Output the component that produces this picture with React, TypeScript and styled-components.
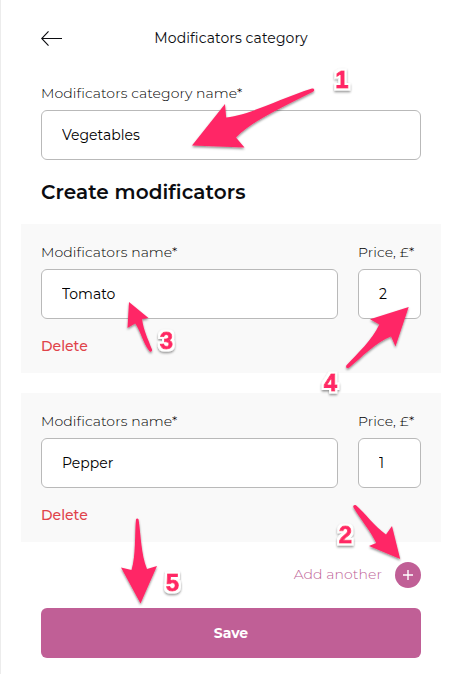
import React from "react";
import styled, { createGlobalStyle } from "styled-components";

const GlobalStyle = createGlobalStyle`
  * { box-sizing: border-box; }
  body {
    margin: 0;
    background: #fff;
    color: #0b0c10;
    font-family: Montserrat, Inter, sans-serif;
    font-size: 14px;
    line-height: 18px;
  }
`;

const Page = styled.main`
  position: relative;
  display: flex;
  flex-direction: column;
  width: 454px;
  height: 674px;
  padding: 29px 13px 0 20px;
  border-left: 1px solid #ececec;
  overflow: hidden;
`;

const Header = styled.header`
  display: grid;
  grid-template-columns: 22px 1fr 22px;
  align-items: center;
  height: 18px;
  margin: 0 20px 37px;
`;

const BackButton = styled.button`
  display: flex;
  padding: 0;
  border: 0;
  background: none;
`;

const Title = styled.h1`
  margin: 0;
  text-align: center;
  font-size: 14px;
  font-weight: 400;
  white-space: nowrap;
  letter-spacing: 0.07px;
`;

const Field = styled.label<{ $width: number }>`
  display: flex;
  flex-direction: column;
  gap: 8px;
  width: ${(p) => p.$width}px;
`;

const Label = styled.span`
  font-weight: 300;
  color: #000;
  white-space: nowrap;
  letter-spacing: 0.08px;
`;

const Input = styled.input`
  width: 100%;
  height: 50px;
  padding: 0 20px;
  border: 1px solid #b9b9b9;
  border-radius: 6px;
  background: #fff;
  color: #000;
  font: inherit;
  outline: none;
`;

const CategoryField = styled.div`
  margin: 0 20px 19px;
`;

const Heading = styled.h2`
  margin: 0 20px 19px;
  font-size: 20px;
  font-weight: 600;
  line-height: 26px;
  letter-spacing: 0.08px;
  white-space: nowrap;
`;

const CardList = styled.div`
  display: flex;
  flex-direction: column;
  gap: 20px;
  width: 420px;
`;

const Card = styled.section`
  height: 149px;
  padding: 19px 20px 0;
  background: #f9f9f9;
`;

const FieldRow = styled.div`
  display: flex;
  gap: 20px;
  margin-bottom: 18px;
`;

const DeleteButton = styled.button`
  display: block;
  padding: 0;
  border: 0;
  background: none;
  color: #e0434a;
  font: inherit;
  font-weight: 500;
`;

const AddRow = styled.div`
  display: flex;
  align-items: center;
  justify-content: flex-end;
  gap: 13px;
  height: 26px;
  margin: 20px 20px;
  color: #c05f96;
`;

const AddText = styled.span`
  padding-bottom: 2px;
  font-weight: 300;
  letter-spacing: 0.08px;
`;

const AddButton = styled.button`
  display: flex;
  align-items: center;
  justify-content: center;
  width: 26px;
  height: 26px;
  padding: 0;
  border: 0;
  border-radius: 50%;
  background: #c05f96;
`;

const SaveButton = styled.button`
  height: 50px;
  margin: 0 20px;
  padding: 0;
  border: 0;
  border-radius: 6px;
  background: #c05f96;
  color: #fff;
  font: inherit;
  font-weight: 700;
`;

const Annotations = styled.svg`
  position: absolute;
  top: 0;
  left: -1px;
  pointer-events: none;
`;

const StepNumber = styled.text`
  font-family: "Liberation Sans", Arial, sans-serif;
  font-size: 24px;
  font-weight: 700;
  text-anchor: middle;
  fill: #ff2866;
  stroke: #ff2866;
  stroke-width: 0.9px;
`;

const arrows = [
  "M192 145.5L225 104L226.2 117.5C250 115 282 98 312 88.6C314.5 88.2 315 90.8 313 91.8C283 107 252 121 236 137.5L244.5 147.5Z",
  "M400.2 559L392 526L386 534.5C374 526 366 514 356 505.3C354 504 352.6 506 353.5 507.5C360 519 370 530 376.2 543L369 546Z",
  "M129 302L148.5 318L142 319C143.5 330 148 339 152 349.5C152.5 351.5 150.5 352.5 149.3 351C143 343 141 332 135.2 323.5L127.5 328Z",
  "M408.7 307L370 319.3L379.3 324.5C372 340 358 353 346.3 365.5C345.5 367.5 347 369 349 367.8C362 357 376 342 391 336.5L395.5 346.5Z",
  "M140.5 603.5L157 566L147 569C141 554 141 536 138.6 519.5C138 518.2 136.3 518.2 136 519.5C134.5 536 136 555 131.5 570L121 567.5Z",
];

const steps = [
  { label: "1", x: 342, y: 88 },
  { label: "2", x: 345.5, y: 543 },
  { label: "3", x: 166.5, y: 349 },
  { label: "4", x: 330.5, y: 391 },
  { label: "5", x: 172.5, y: 591 },
];

const modificators = [
  { name: "Tomato", price: "2" },
  { name: "Pepper", price: "1" },
];

export default function App() {
  return (
    <>
      <GlobalStyle />
      <Page>
        <Header>
          <BackButton aria-label="Back">
            <svg width="22" height="18" viewBox="0 0 22 18" fill="none" stroke="#0b0c10" strokeWidth="1.1">
              <path d="M7.5 2.3L0.7 9.5L7.5 16.7M0.7 9.5H21" />
            </svg>
          </BackButton>
          <Title>Modificators category</Title>
        </Header>
        <CategoryField>
          <Field $width={380}>
            <Label>Modificators category name*</Label>
            <Input defaultValue="Vegetables" />
          </Field>
        </CategoryField>
        <Heading>Create modificators</Heading>
        <CardList>
          {modificators.map((m) => (
            <Card key={m.name}>
              <FieldRow>
                <Field $width={297}>
                  <Label>Modificators name*</Label>
                  <Input defaultValue={m.name} />
                </Field>
                <Field $width={63}>
                  <Label>Price, £*</Label>
                  <Input defaultValue={m.price} />
                </Field>
              </FieldRow>
              <DeleteButton>Delete</DeleteButton>
            </Card>
          ))}
        </CardList>
        <AddRow>
          <AddText>Add another</AddText>
          <AddButton aria-label="Add another">
            <svg width="12" height="12" viewBox="0 0 12 12" stroke="#fff" strokeWidth="1.4">
              <path d="M6 1V11M1 6H11" />
            </svg>
          </AddButton>
        </AddRow>
        <SaveButton>Save</SaveButton>
        <Annotations width="454" height="674" viewBox="0 0 454 674">
          <defs>
            <filter id="shadow" x="-20%" y="-20%" width="140%" height="150%">
              <feDropShadow dx="0" dy="1.5" stdDeviation="1" floodColor="#000" floodOpacity="0.45" />
            </filter>
            <filter id="outline" x="-50%" y="-30%" width="200%" height="170%">
              <feMorphology in="SourceAlpha" operator="dilate" radius="1.7" result="spread" />
              <feFlood floodColor="#fff" />
              <feComposite in2="spread" operator="in" result="halo" />
              <feMerge result="badge">
                <feMergeNode in="halo" />
                <feMergeNode in="SourceGraphic" />
              </feMerge>
              <feDropShadow in="badge" dx="0" dy="1.5" stdDeviation="1" floodColor="#000" floodOpacity="0.45" />
            </filter>
          </defs>
          {arrows.map((d) => (
            <path key={d} d={d} fill="#ff2866" filter="url(#shadow)" />
          ))}
          {steps.map((s) => (
            <StepNumber key={s.label} x={s.x} y={s.y} filter="url(#outline)">
              {s.label}
            </StepNumber>
          ))}
        </Annotations>
      </Page>
    </>
  );
}
